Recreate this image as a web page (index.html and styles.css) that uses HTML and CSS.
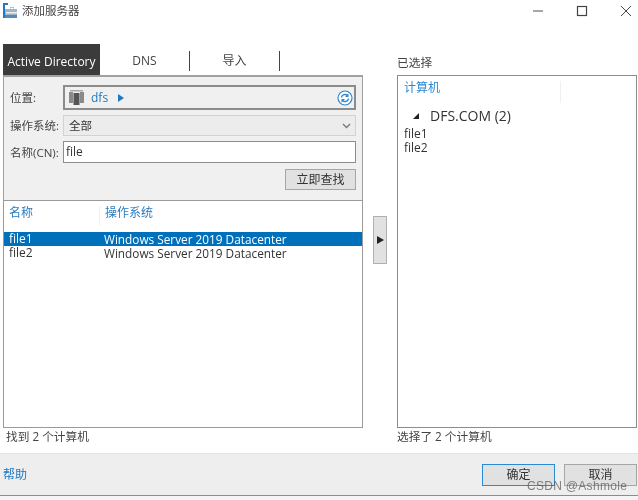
FILE: index.html
```html
<!DOCTYPE html>
<html lang="zh-CN">
<head>
<meta charset="utf-8">
<title>添加服务器</title>
<link rel="stylesheet" href="styles.css">
</head>
<body>
<div class="window">
  <header class="titlebar">
    <svg class="app-icon" width="16" height="16" viewBox="0 0 16 16">
      <path d="M1 0h5v2H3v13H1z" fill="#1f78c8"/>
      <path d="M6 6h2V4h4v2h3v9H3V6z" fill="#9fb4c6"/>
      <path d="M4 9h11v1.500H4z" fill="#e8eef3"/>
      <path d="M8.500 4.800h3V6h-3z" fill="#fff"/>
      <path d="M3 12h12v3H3z" fill="#5d87ab"/>
    </svg>
    <span class="title">添加服务器</span>
    <div class="win-controls">
      <svg width="12" height="12" viewBox="0 0 12 12"><path d="M1 6h10" stroke="#777" stroke-width="1.300"/></svg>
      <svg width="12" height="12" viewBox="0 0 12 12"><rect x="1.500" y="1.500" width="9" height="9" fill="none" stroke="#444" stroke-width="1.200"/></svg>
      <svg width="12" height="12" viewBox="0 0 12 12"><path d="M1 1l10 10M11 1L1 11" stroke="#444" stroke-width="1"/></svg>
    </div>
  </header>

  <main class="content">
    <section class="left">
      <nav class="tabs">
        <span class="tab active">Active Directory</span>
        <span class="tab dns">DNS</span>
        <span class="tab import">导入</span>
      </nav>
      <div class="filters">
        <div class="field loc-row">
          <label>位置:</label>
          <div class="input location">
            <svg width="16" height="15" viewBox="0 0 16 15"><path d="M0 2h4v11H0zM11 2h4v11h-4z" fill="#8a8a8a"/><path d="M4.500 3h6v12h-6z" fill="#555"/><path d="M1 0h13v1.500H1z" fill="#aaa"/></svg>
            <span class="crumb">dfs</span>
            <span class="crumb-arrow"></span>
            <svg class="refresh" width="16" height="16" viewBox="0 0 16 16"><circle cx="8" cy="8" r="7" fill="#fff" stroke="#2f86cf" stroke-width="1.200"/><path d="M4.500 7.500A3.500 3.500 0 0 1 10.500 5.500M11.500 8.500A3.500 3.500 0 0 1 5.500 10.500" fill="none" stroke="#2f86cf" stroke-width="1.500"/><path d="M11.500 3.500v3.500H8zM4.500 12.500V9H8z" fill="#2f86cf"/></svg>
          </div>
        </div>
        <div class="field os-row">
          <label>操作系统:</label>
          <div class="input select">
            <span>全部</span>
            <svg width="9" height="6" viewBox="0 0 9 6"><path d="M1 1l3.500 3.500L8 1" fill="none" stroke="#777" stroke-width="1.300"/></svg>
          </div>
        </div>
        <div class="field name-row">
          <label>名称(CN):</label>
          <div class="input text">file</div>
        </div>
        <div class="search-row"><button class="btn search">立即查找</button></div>
      </div>
      <div class="list">
        <div class="list-head">
          <span class="col-name">名称</span>
          <span class="col-os">操作系统</span>
        </div>
        <div class="row selected"><span class="col-name">file1</span><span class="col-os">Windows Server 2019 Datacenter</span></div>
        <div class="row"><span class="col-name">file2</span><span class="col-os">Windows Server 2019 Datacenter</span></div>
      </div>
      <div class="status">找到 2 个计算机</div>
    </section>

    <div class="mover"><button class="move-btn"><span class="move-arrow"></span></button></div>

    <section class="right">
      <div class="right-label">已选择</div>
      <div class="selected-box">
        <div class="selected-head"><span>计算机</span></div>
        <div class="group"><span class="twist"></span>DFS.COM (2)</div>
        <div class="sel-item">file1</div>
        <div class="sel-item">file2</div>
      </div>
      <div class="status right-status">选择了 2 个计算机</div>
    </section>
  </main>

  <footer class="footer">
    <a class="help">帮助</a>
    <div class="actions">
      <button class="btn primary">确定</button>
      <button class="btn">取消</button>
    </div>
  </footer>
  <div class="strip"></div>
  <div class="watermark">CSDN @Ashmole</div>
</div>
</body>
</html>
```

FILE: styles.css
```css
* { box-sizing: border-box; }
html, body { margin: 0; padding: 0; }
body {
  width: 638px;
  height: 500px;
  overflow: hidden;
  background: #fff;
  color: #333;
  font: 12px/14px "Open Sans", "Noto Sans CJK SC", sans-serif;
}
.window { position: relative; width: 638px; height: 500px; display: flex; flex-direction: column; filter: blur(0.35px); }

.titlebar { height: 44px; display: flex; align-items: flex-start; padding: 3px 0 0 2px; flex: none; }
.title { margin: 1px 0 0 4px; font-size: 11.500px; color: #444; }
.win-controls { margin-left: auto; display: flex; gap: 32px; padding: 2px 6px 0 0; }

.content { flex: none; height: 409px; display: flex; }

.left { width: 360px; margin-left: 3px; display: flex; flex-direction: column; flex: none; }
.tabs { height: 31px; display: flex; align-items: center; flex: none; }
.tab { display: flex; align-items: center; justify-content: center; height: 20px; border-right: 1px solid #444; color: #444; }
.tab.active { height: 31px; width: 97px; background: #3b3b3b; color: #fff; border: 0; padding-top: 5px; }
.tab.dns { width: 90px; margin-top: 3px; }
.tab.import { width: 90px; margin-top: 3px; }

.filters {
  height: 125px;
  flex: none;
  background: #f0f0f0;
  border: 1px solid #a0a0a0;
  border-bottom: 0;
  border-top-width: 2px;
  padding: 8px 6px 0 1px;
}
.field { display: flex; align-items: center; }
.field label { width: 58px; flex: none; padding: 1px 0 0 5px; white-space: nowrap; font-size: 11.500px; color: #444; }
.input { flex: 1; display: flex; align-items: center; }
.location { height: 25px; border: 2px solid #8c8c8c; padding: 0 1px 0 4px; }
.crumb { margin-left: 6px; color: #1f78c0; }
.crumb-arrow { margin-left: 10px; border-left: 6px solid #1f78c0; border-top: 4px solid transparent; border-bottom: 4px solid transparent; }
.refresh { margin-left: auto; }
.os-row { margin-top: 5px; }
.select { height: 21px; border: 1px solid #d2d2d2; background: #ececec; padding: 0 4px 0 5px; justify-content: space-between; font-size: 11.500px; }
.name-row { margin-top: 5px; }
.text { height: 22px; border: 1px solid #8c8c8c; background: #fff; padding-left: 2px; }
.search-row { display: flex; justify-content: flex-end; margin-top: 6px; }

.btn {
  width: 73px;
  height: 21px;
  padding: 0;
  font: inherit;
  color: #333;
  background: #e1e1e1;
  border: 1px solid #a6a6a6;
}
.search { width: 71px; }
.primary { border-color: #2a8ad4; }

.list { height: 228px; flex: none; border: 1px solid #9a9a9a; background: #fff; }
.list-head { height: 31px; display: flex; padding-top: 5px; color: #2a7cc0; }
.list-head .col-name { padding-left: 5px; width: 95px; }
.list-head .col-os { border-left: 1px solid #f0f0f0; padding-left: 5px; height: 20px; }
.row { height: 14px; display: flex; }
.row.selected { background: #0070bb; color: #fff; }
.col-name { width: 100px; padding-left: 5px; flex: none; }
.col-os { width: 193px; }
.row .col-os { font-size: 11.800px; }
.status { flex: 1; padding: 1px 0 0 3px; color: #444; font-size: 11.700px; }

.mover { width: 34px; flex: none; padding: 172px 0 0 10px; }
.move-btn { display: flex; align-items: center; justify-content: center; width: 14px; height: 48px; padding: 0; background: #e1e1e1; border: 1px solid #b0b0b0; }
.move-arrow { border-left: 7px solid #222; border-top: 4px solid transparent; border-bottom: 4px solid transparent; }

.right { width: 240px; flex: none; display: flex; flex-direction: column; }
.right-label { height: 31px; padding-top: 11px; color: #444; font-size: 11.700px; }
.selected-box { height: 353px; flex: none; border: 1px solid #8c8c8c; background: #fff; }
.selected-head { height: 26px; padding: 5px 0 0 6px; color: #2a8ad4; }
.selected-head span { display: block; width: 157px; height: 22px; border-right: 1px solid #f0f0f0; }
.group { display: flex; align-items: center; height: 18px; margin: 5px 0 2px; padding-left: 15px; font-size: 14px; color: #333; }
.twist { width: 0; height: 0; margin-right: 11px; border-left: 6px solid transparent; border-bottom: 6px solid #222; }
.sel-item { height: 14px; padding-left: 6px; }
.right-status { padding-left: 0; }

.footer {
  height: 43px;
  flex: none;
  display: flex;
  justify-content: space-between;
  background: #eeeeee;
  border-top: 1px solid #e4e4e4;
  border-bottom: 1px solid #8c8c8c;
  padding: 10px 1px 0 3px;
}
.help { color: #1f78c0; padding-top: 4px; }
.actions { display: flex; gap: 9px; }
.actions .btn { height: 22px; }
.strip { flex: 1; background: #f5f5f5; }
.watermark {
  position: absolute;
  left: 527px;
  top: 479px;
  font: 12px/14px "Liberation Sans", sans-serif;
  letter-spacing: 0.3px;
  color: rgba(90, 90, 90, 0.75);
  white-space: nowrap;
}
```
